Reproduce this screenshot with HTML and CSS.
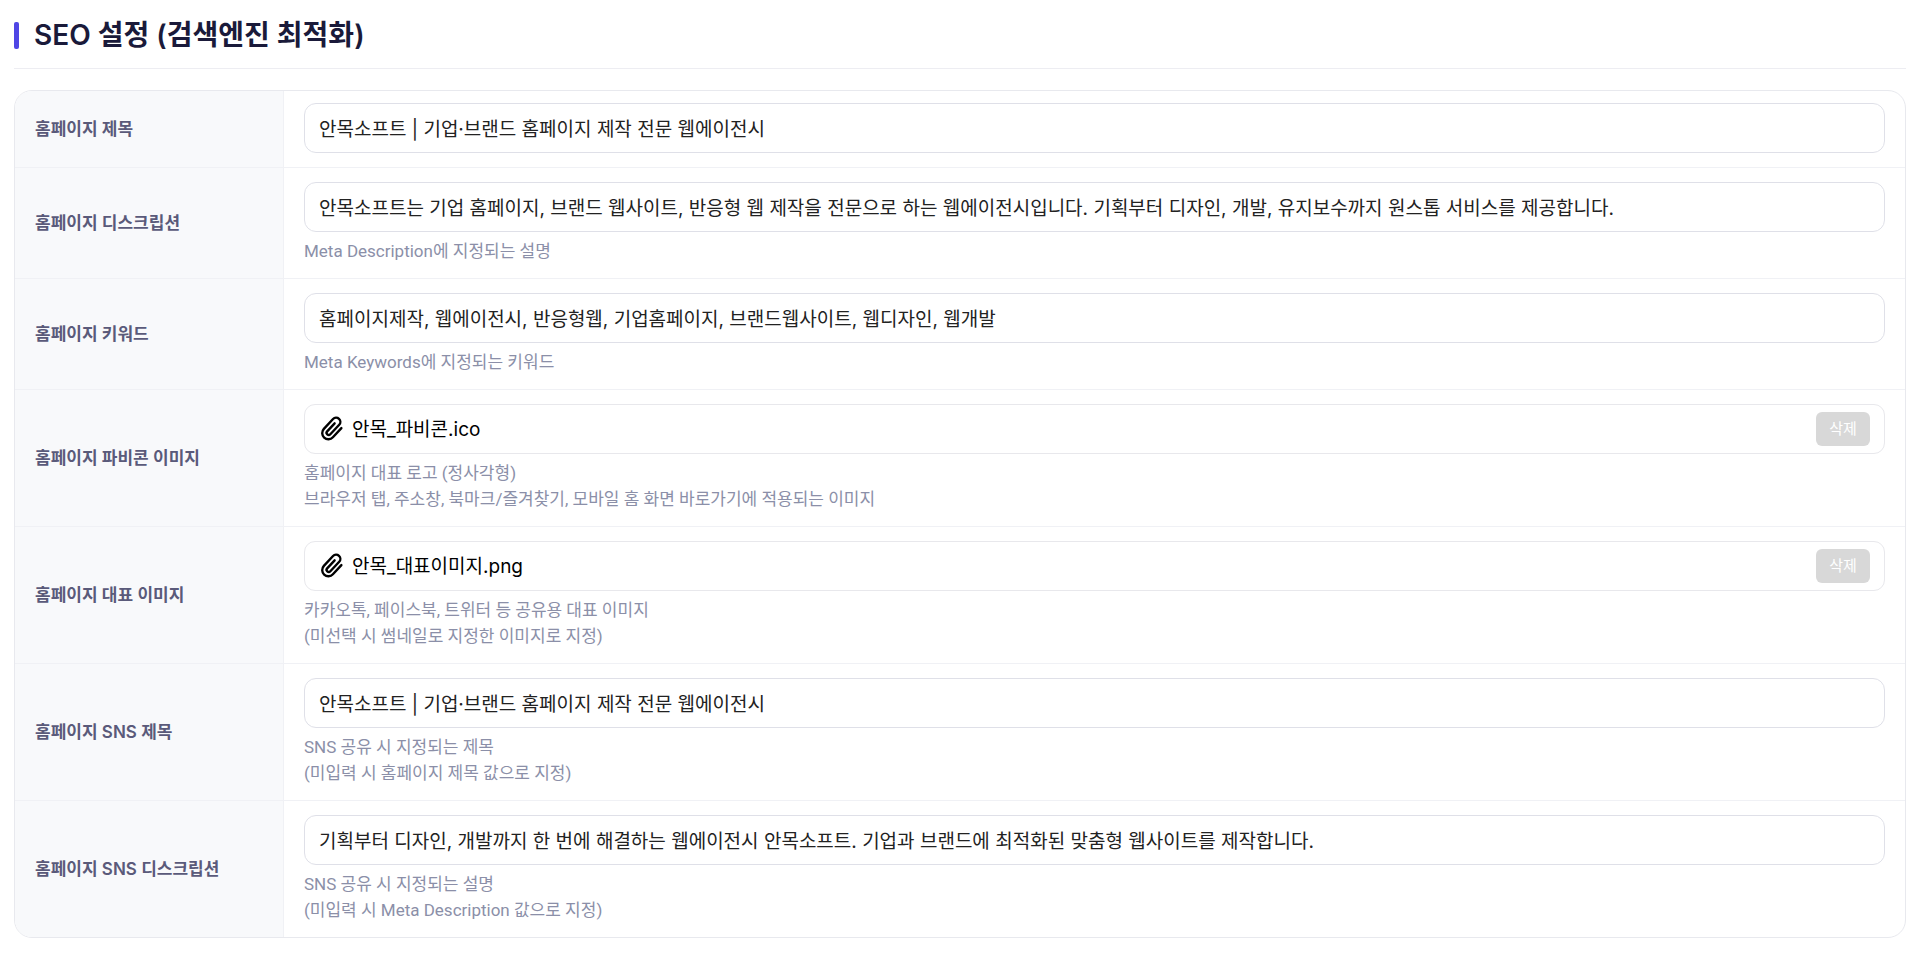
FILE: index.html
```html
<!DOCTYPE html>
<html lang="ko">
<head>
  <meta charset="utf-8">
  <meta name="viewport" content="width=device-width, initial-scale=1">
  <title>SEO 설정 (검색엔진 최적화)</title>
  <link rel="stylesheet" href="styles.css">
</head>
<body>
  <svg class="sprite" aria-hidden="true">
    <symbol id="clip" viewBox="0 0 24 24">
      <g transform="rotate(43 12 12)" fill="none" stroke="currentColor" stroke-width="2.2" stroke-linecap="round" stroke-linejoin="round">
        <path d="M17.800 5.500v11.500a5.700 5.700 0 0 1-11.400 0V4.600a3.900 3.900 0 0 1 7.800 0v12a2 2 0 0 1-4 0V6.500"/>
      </g>
    </symbol>
  </svg>
  <main class="page">
    <header class="section-head">
      <h1 class="section-title">SEO 설정 (검색엔진 최적화)</h1>
    </header>
    <form class="card">
      <table class="form-table">
        <tbody>
          <tr>
            <th scope="row"><label for="title">홈페이지 제목</label></th>
            <td><input class="field" id="title" type="text" value="안목소프트 | 기업·브랜드 홈페이지 제작 전문 웹에이전시"></td>
          </tr>
          <tr>
            <th scope="row"><label for="desc">홈페이지 디스크립션</label></th>
            <td>
              <input class="field" id="desc" type="text" value="안목소프트는 기업 홈페이지, 브랜드 웹사이트, 반응형 웹 제작을 전문으로 하는 웹에이전시입니다. 기획부터 디자인, 개발, 유지보수까지 원스톱 서비스를 제공합니다.">
              <p class="hint">Meta Description에 지정되는 설명</p>
            </td>
          </tr>
          <tr>
            <th scope="row"><label for="keywords">홈페이지 키워드</label></th>
            <td>
              <input class="field" id="keywords" type="text" value="홈페이지제작, 웹에이전시, 반응형웹, 기업홈페이지, 브랜드웹사이트, 웹디자인, 웹개발">
              <p class="hint">Meta Keywords에 지정되는 키워드</p>
            </td>
          </tr>
          <tr>
            <th scope="row">홈페이지 파비콘 이미지</th>
            <td>
              <div class="field file">
                <svg class="file-icon" aria-hidden="true"><use href="#clip"/></svg>
                <span class="file-name">안목_파비콘.ico</span>
                <button class="delete" type="button">삭제</button>
              </div>
              <p class="hint">홈페이지 대표 로고 (정사각형)<br>브라우저 탭, 주소창, 북마크/즐겨찾기, 모바일 홈 화면 바로가기에 적용되는 이미지</p>
            </td>
          </tr>
          <tr>
            <th scope="row">홈페이지 대표 이미지</th>
            <td>
              <div class="field file">
                <svg class="file-icon" aria-hidden="true"><use href="#clip"/></svg>
                <span class="file-name">안목_대표이미지.png</span>
                <button class="delete" type="button">삭제</button>
              </div>
              <p class="hint">카카오톡, 페이스북, 트위터 등 공유용 대표 이미지<br>(미선택 시 썸네일로 지정한 이미지로 지정)</p>
            </td>
          </tr>
          <tr>
            <th scope="row"><label for="sns-title">홈페이지 SNS 제목</label></th>
            <td>
              <input class="field" id="sns-title" type="text" value="안목소프트 | 기업·브랜드 홈페이지 제작 전문 웹에이전시">
              <p class="hint">SNS 공유 시 지정되는 제목<br>(미입력 시 홈페이지 제목 값으로 지정)</p>
            </td>
          </tr>
          <tr>
            <th scope="row"><label for="sns-desc">홈페이지 SNS 디스크립션</label></th>
            <td>
              <input class="field" id="sns-desc" type="text" value="기획부터 디자인, 개발까지 한 번에 해결하는 웹에이전시 안목소프트. 기업과 브랜드에 최적화된 맞춤형 웹사이트를 제작합니다.">
              <p class="hint">SNS 공유 시 지정되는 설명<br>(미입력 시 Meta Description 값으로 지정)</p>
            </td>
          </tr>
        </tbody>
      </table>
    </form>
  </main>
</body>
</html>
```
FILE: styles.css
```css
* {
  box-sizing: border-box;
}

body {
  margin: 0;
  background: #fff;
  color: #222;
  font-family: Inter, "Noto Sans CJK KR", sans-serif;
}

.sprite {
  display: none;
}

.page {
  padding: 0 14px;
}

.section-head {
  padding: 14px 0 12px;
  border-bottom: 1px solid #ededf2;
}

.section-title {
  display: flex;
  align-items: center;
  gap: 15px;
  margin: 0;
  color: #1a1a3a;
  font-size: 28px;
  font-weight: 600;
  line-height: 42px;
}

.section-title::before {
  content: "";
  width: 5px;
  height: 27px;
  border-radius: 2px;
  background: #4f46e5;
}

.card {
  margin-top: 21px;
  border: 1px solid #e8e9ee;
  border-radius: 18px;
  overflow: hidden;
}

.form-table {
  width: 100%;
  border-spacing: 0;
}

th,
td {
  border-bottom: 1px solid #f0f1f5;
}

tr:last-child > * {
  border-bottom: 0;
}

th {
  width: 269px;
  padding: 0 20px 3px;
  border-right: 1px solid #f0f1f5;
  background: #f8f9fb;
  color: #5a5a7a;
  font-size: 17px;
  font-weight: 600;
  text-align: left;
}

td {
  padding: 14px 20px;
}

tr:first-child > td {
  padding-top: 12px;
}

.field {
  display: block;
  width: 100%;
  height: 50px;
  padding: 0 14px 2px;
  border: 1px solid #dfe0e8;
  border-radius: 12px;
  background: #fff;
  color: #222;
  font-family: inherit;
  font-size: 19px;
}

.file {
  display: flex;
  align-items: center;
  gap: 7px;
  padding-bottom: 0;
  border-color: #e8e8ec;
  border-radius: 11px;
  color: #000;
}

.file-icon {
  width: 26px;
  height: 26px;
}

.file-name {
  flex: 1;
  padding-bottom: 3px;
}

.delete {
  width: 54px;
  height: 34px;
  padding: 0 0 3px;
  border: 0;
  border-radius: 6px;
  background: #d8d8d8;
  color: #fff;
  font-family: inherit;
  font-size: 15px;
}

.hint {
  margin: 6px 0 0;
  color: #8b8fa8;
  font-family: Roboto, "Noto Sans CJK KR", sans-serif;
  font-size: 17px;
  line-height: 26px;
}
```
